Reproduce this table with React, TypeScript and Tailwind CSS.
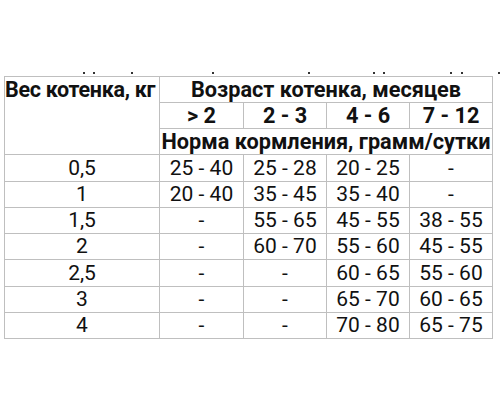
import React from "react";

const rows: [string, string, string, string, string, boolean][] = [
  ["0,5", "25 - 40", "25 - 28", "20 - 25", "-", true],
  ["1", "20 - 40", "35 - 45", "35 - 40", "-", false],
  ["1,5", "-", "55 - 65", "45 - 55", "38 - 55", false],
  ["2", "-", "60 - 70", "55 - 60", "45 - 55", false],
  ["2,5", "-", "-", "60 - 65", "55 - 60", true],
  ["3", "-", "-", "65 - 70", "60 - 65", false],
  ["4", "-", "-", "70 - 80", "65 - 75", false],
];

const dots = [83, 93, 131, 212, 308, 373, 383, 450, 461, 498];

export default function App() {
  return (
    <div className="w-[500px] h-[420px] bg-white" style={{ fontFamily: "Roboto, 'Noto Sans', sans-serif" }}>
      <svg width="500" height="76" className="block">
        {dots.map((x) => (
          <rect key={x} x={x} y={72} width={2} height={2} fill="#333" />
        ))}
      </svg>
      <div className="ml-[4px] w-[489px] border border-[#bfbfbf] bg-[#bfbfbf] grid grid-cols-[154px_83px_82px_82px_82px] gap-px text-[#111] text-[21px] leading-none">
        <div className="row-span-3 bg-white font-bold text-[21.5px] tracking-[-0.3px] whitespace-nowrap h-full">
          <div className="h-[25px] flex items-center">Вес котенка, кг</div>
        </div>
        <div className="col-span-4 h-[25px] bg-white font-bold text-[21.7px] flex items-center justify-center whitespace-nowrap">
          Возраст котенка, месяцев
        </div>
        {["> 2", "2 - 3", "4 - 6", "7 - 12"].map((t) => (
          <div key={t} className="h-[25px] bg-white font-bold text-[21.7px] flex items-center justify-center whitespace-nowrap">
            {t}
          </div>
        ))}
        <div className="col-span-4 h-[25px] bg-white font-bold text-[21.7px] flex items-center justify-center whitespace-nowrap">
          Норма кормления, грамм/сутки
        </div>
        {rows.map((r, i) => (
          <React.Fragment key={i}>
            {r.slice(0, 5).map((c, j) => (
              <div
                key={j}
                className={`${r[5] ? "h-[26px]" : "h-[25px]"} bg-white flex items-center justify-center whitespace-nowrap`}
              >
                {c as string}
              </div>
            ))}
          </React.Fragment>
        ))}
      </div>
    </div>
  );
}
